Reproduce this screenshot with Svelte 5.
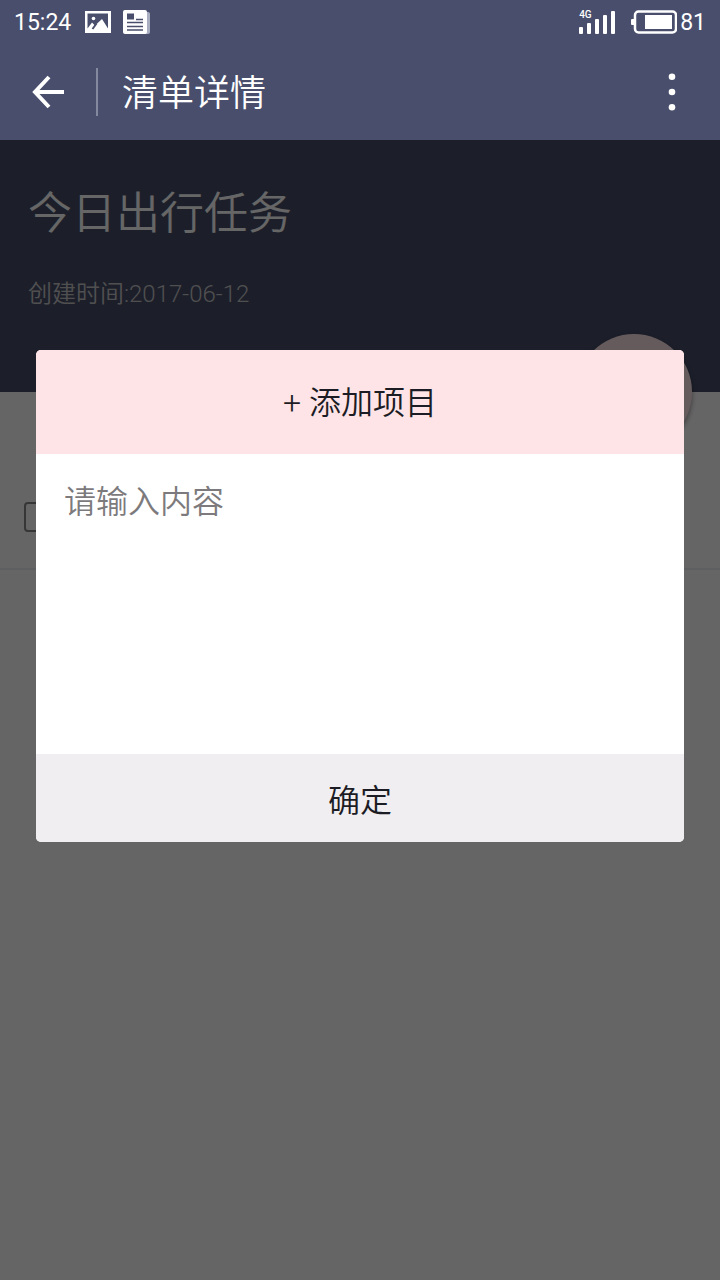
<script lang="ts">
	/**
	 * Checklist detail screen with the "add item" dialog open on top.
	 */

	const list = {
		title: '今日出行任务',
		created: '2017-06-12'
	};

	const battery = 81;

	// Signal bar heights, weakest first.
	const bars = [7, 11, 15, 19, 23];

	let content = $state('');
	let done = $state(false);
</script>

<div class="screen">
	<div class="status">
		<span class="clock">15:24</span>
		<svg class="picture" width="26" height="22" viewBox="0 0 26 22" aria-hidden="true">
			<path
				fill="#fff"
				fill-rule="evenodd"
				d="M0 0h26v22H0z M2.500 2.500v15l4.500-6 3 3 7-6.500 6 9.500V2.500z"
			/>
			<circle cx="8.500" cy="7.500" r="1.800" fill="#fff" />
			<path d="M11.500 12.500L7.500 18" stroke="#484e6c" stroke-width="2" />
		</svg>
		<svg class="news" width="27" height="24" viewBox="0 0 27 24" aria-hidden="true">
			<path d="M20 2h5a2 2 0 0 1 2 2v18a2 2 0 0 1-2 2h-5z" fill="#a9adc0" />
			<rect width="24" height="24" rx="2" fill="#fff" />
			<path d="M4 3.500h7v6H4z" fill="#484e6c" />
			<path d="M13 9.500h7M4 12.500h16M4 16.500h16M4 20h16" stroke="#484e6c" stroke-width="1.300" />
		</svg>
		<span class="signal">
			<span class="network">4G</span>
			<svg width="38" height="23" viewBox="0 0 38 23" aria-hidden="true">
				{#each bars as h, i (h)}
					<rect x={1 + i * 8} y={23 - h} width="4" height={h} rx="1" fill="#fff" />
				{/each}
			</svg>
		</span>
		<svg class="battery" width="46" height="24" viewBox="0 0 46 24" aria-hidden="true">
			<rect x="4" y="1.500" width="41" height="21" rx="3.500" fill="none" stroke="#fff" stroke-width="2.500" />
			<rect x="0" y="9" width="4" height="6" rx="1" fill="#fff" />
			<rect x="14" y="5" width="27" height="14" fill="#fff" />
		</svg>
		<span class="level">{battery}</span>
	</div>

	<header class="appbar">
		<button type="button" class="back" aria-label="返回">
			<svg width="32" height="34" viewBox="0 0 32 34" aria-hidden="true">
				<path d="M17 2L3 17l14 15M3 17h29" fill="none" stroke="#fff" stroke-width="4" />
			</svg>
		</button>
		<h1>清单详情</h1>
		<button type="button" class="more" aria-label="更多">
			<svg width="8" height="40" viewBox="0 0 8 40" aria-hidden="true">
				<circle cx="4" cy="4.700" r="3.300" fill="#fff" />
				<circle cx="4" cy="20" r="3.300" fill="#fff" />
				<circle cx="4" cy="35.300" r="3.300" fill="#fff" />
			</svg>
		</button>
	</header>

	<main>
		<section class="summary">
			<h2>{list.title}</h2>
			<p>创建时间:{list.created}</p>
			<button type="button" class="fab" aria-label="添加项目"></button>
		</section>

		<ul class="items">
			<li><input type="checkbox" aria-label="完成" bind:checked={done} /></li>
		</ul>

		<div class="backdrop">
			<form
				class="dialog"
				role="dialog"
				aria-modal="true"
				aria-labelledby="dialog-title"
				onsubmit={(e) => e.preventDefault()}
			>
				<h2 id="dialog-title">+ 添加项目</h2>
				<textarea aria-labelledby="dialog-title" placeholder="请输入内容" bind:value={content}
				></textarea>
				<button type="submit">确定</button>
			</form>
		</div>
	</main>
</div>

<style>
	:global(body) {
		margin: 0;
	}

	.screen {
		display: flex;
		flex-direction: column;
		min-height: 100vh;
		font-family: Roboto, 'Noto Sans CJK SC DemiLight', 'Noto Sans CJK SC', sans-serif;
		font-weight: 350;
		background: #fffcff;
	}

	button {
		padding: 0;
		border: 0;
		background: none;
		font: inherit;
		color: inherit;
		cursor: pointer;
	}

	h1,
	h2,
	p,
	ul {
		margin: 0;
		padding: 0;
		font-weight: 350;
	}

	svg {
		display: block;
		flex: none;
	}

	.status {
		display: flex;
		align-items: center;
		height: 44px;
		padding: 0 14px;
		background: #484e6c;
		color: #fff;
		font-size: 23px;
		font-weight: 400;
	}

	.picture {
		margin-left: 14px;
	}

	.news {
		margin-left: 12px;
	}

	.signal {
		position: relative;
		margin-left: auto;
	}

	.network {
		position: absolute;
		top: -1px;
		left: 1px;
		font-size: 10px;
		line-height: 10px;
		font-weight: 500;
	}

	.battery {
		margin: 0 3px 0 15px;
	}

	.appbar {
		display: flex;
		align-items: center;
		height: 96px;
		background: #484e6c;
		color: #fff;
	}

	.back {
		display: grid;
		place-items: center;
		width: 98px;
		height: 48px;
		border-right: 2px solid #8589a0;
		box-sizing: border-box;
	}

	h1 {
		padding-top: 4px;
		margin-left: 24px;
		font-size: 36px;
		line-height: 48px;
	}

	.more {
		display: grid;
		place-items: center;
		width: 96px;
		height: 96px;
		margin-left: auto;
	}

	main {
		position: relative;
		flex: 1;
	}

	.summary {
		position: relative;
		height: 252px;
		padding: 42px 28px 0;
		box-sizing: border-box;
		background: #464e69;
		color: #fff;
	}

	.summary h2 {
		font-size: 44px;
		line-height: 64px;
	}

	.summary p {
		margin-top: 30px;
		font-size: 24px;
		line-height: 36px;
		color: #c8c6c8;
	}

	.fab {
		position: absolute;
		right: 28px;
		bottom: -58px;
		width: 116px;
		height: 116px;
		border-radius: 50%;
		background: #ffe4e7;
		box-shadow: 0 3px 5px rgba(0, 0, 0, 0.4);
	}

	.items {
		padding-top: 72px;
		list-style: none;
	}

	.items li {
		display: flex;
		align-items: center;
		height: 106px;
		padding: 2px 24px 0;
		box-sizing: border-box;
		border-bottom: 2px solid #ebeef0;
	}

	.items input {
		appearance: none;
		width: 30px;
		height: 30px;
		margin: 0;
		border: 2px solid #888;
		border-radius: 4px;
	}

	.backdrop {
		position: absolute;
		inset: 0;
		padding: 210px 36px 0;
		background: rgba(0, 0, 0, 0.6);
	}

	.dialog {
		display: flex;
		flex-direction: column;
		overflow: hidden;
		border-radius: 5px;
		background: #fff;
		color: #1c1c24;
		font-size: 32px;
	}

	.dialog h2 {
		padding-top: 2px;
		font-size: 32px;
		line-height: 102px;
		text-align: center;
		background: #ffe4e7;
	}

	.dialog textarea {
		height: 300px;
		padding: 24px 28px;
		border: 0;
		outline: 0;
		box-sizing: border-box;
		resize: none;
		background: #fff;
		font: inherit;
		line-height: 48px;
		color: inherit;
	}

	.dialog textarea::placeholder {
		color: #7c7a7c;
		opacity: 1;
	}

	.dialog button {
		height: 88px;
		background: #f0eef1;
	}
</style>
